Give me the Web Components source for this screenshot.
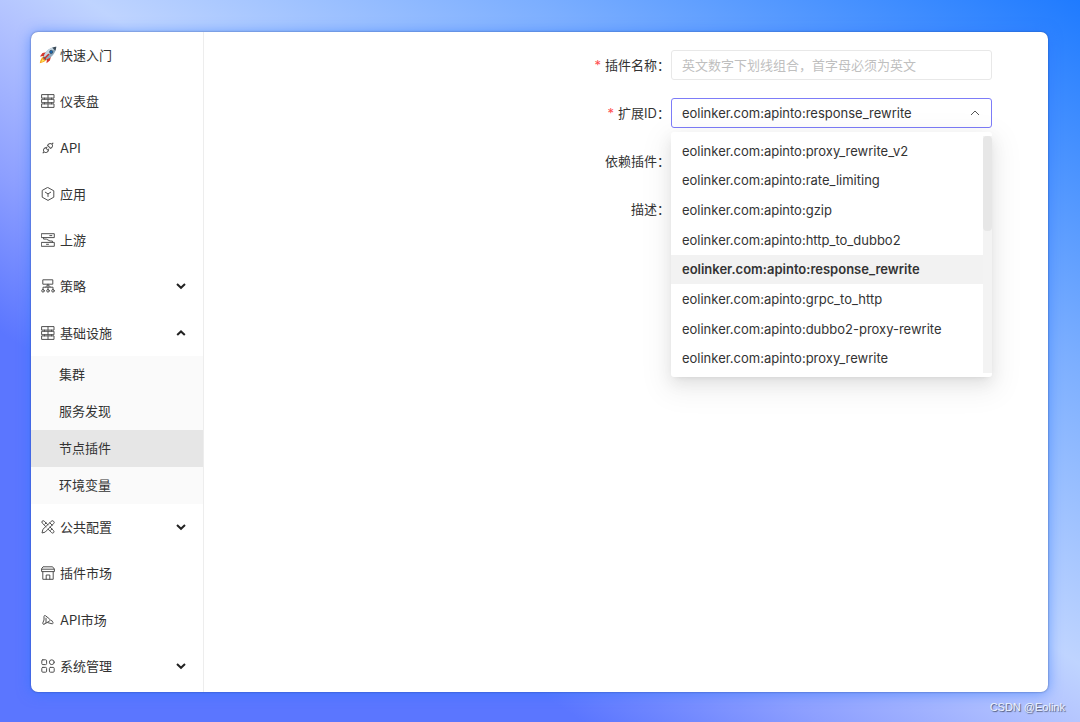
<!DOCTYPE html>
<html lang="zh-CN">
<head>
<meta charset="utf-8">
<meta name="viewport" content="width=device-width, initial-scale=1">
<title>节点插件</title>
<style>
  html, body { margin: 0; }
  body {
    font: 13px/20px Inter, "Noto Sans CJK SC", sans-serif;
    color: #333;
  }
</style>
</head>
<body>
<app-page>
  <side-nav slot="nav">
    <nav-item icon="rocket">快速入门</nav-item>
    <nav-item icon="grid">仪表盘</nav-item>
    <nav-item icon="api">API</nav-item>
    <nav-item icon="app">应用</nav-item>
    <nav-item icon="upstream">上游</nav-item>
    <nav-item icon="policy" arrow="down">策略</nav-item>
    <nav-item icon="grid" arrow="up">基础设施</nav-item>
    <sub-nav>
      <sub-item>集群</sub-item>
      <sub-item>服务发现</sub-item>
      <sub-item active>节点插件</sub-item>
      <sub-item>环境变量</sub-item>
    </sub-nav>
    <nav-item icon="tools" arrow="down">公共配置</nav-item>
    <nav-item icon="shop">插件市场</nav-item>
    <nav-item icon="market">API市场</nav-item>
    <nav-item icon="apps" arrow="down">系统管理</nav-item>
  </side-nav>
  <plugin-form>
    <form-field label="插件名称" kind="text" required placeholder="英文数字下划线组合，首字母必须为英文"></form-field>
    <form-field label="扩展ID" kind="select" required value="eolinker.com:apinto:response_rewrite">
      <option-panel>
        <option-row>eolinker.com:apinto:proxy_rewrite_v2</option-row>
        <option-row>eolinker.com:apinto:rate_limiting</option-row>
        <option-row>eolinker.com:apinto:gzip</option-row>
        <option-row>eolinker.com:apinto:http_to_dubbo2</option-row>
        <option-row selected>eolinker.com:apinto:response_rewrite</option-row>
        <option-row>eolinker.com:apinto:grpc_to_http</option-row>
        <option-row>eolinker.com:apinto:dubbo2-proxy-rewrite</option-row>
        <option-row>eolinker.com:apinto:proxy_rewrite</option-row>
      </option-panel>
    </form-field>
    <form-field label="依赖插件" kind="text"></form-field>
    <form-field label="描述" kind="textarea"></form-field>
  </plugin-form>
  <span slot="credit">CSDN @Eolink</span>
</app-page>

<script>
const define = (name, render, setup) => customElements.define(name, class extends HTMLElement {
  connectedCallback() {
    if (this.shadowRoot) return;
    this.attachShadow({ mode: 'open' }).innerHTML = render(this);
    if (setup) setup(this);
  }
});

const line = (body) => `<svg viewBox="0 0 14 14" fill="none" stroke="currentColor" stroke-width="1" stroke-linejoin="round" stroke-linecap="round" aria-hidden="true">${body}</svg>`;

const icons = {
  rocket: `<svg class="wide" viewBox="0 0 18 18" aria-hidden="true">
    <path d="M5.2 10.2C2.8 11.1 1.2 13.6.8 17.2c3.3-.5 5.9-2 6.9-4.4z" fill="#f6a21b"/>
    <path d="M4.6 12.2c-1.3.9-2 2.2-2.3 3.8 1.6-.3 2.8-1 3.6-2.3z" fill="#ffe35a"/>
    <path d="M7.3 6.2 3.5 7.1.9 10.6l4.5-.5zM11.9 10.8l-1 3.8-3.4 2.6.4-4.4z" fill="#d5352b"/>
    <path d="M4.8 10.2C6.3 5.2 10.8 1.3 17.3.7c-.6 6.4-4.5 11-9.5 12.5z" fill="#8fa8bb"/>
    <path d="M4.8 10.2C6.3 5.2 10.8 1.3 17.3.7L6.3 11.8z" fill="#c5d5e1"/>
    <path d="M13.3 1.7c1.3-.6 2.6-.9 4-1-.1 1.4-.4 2.7-1 4z" fill="#3d4c58"/>
    <path d="m4.8 10.2-.9 1.3 2.7 2.7 1.3-1z" fill="#5d6970"/>
    <circle cx="12.2" cy="5.9" r="1.6" fill="#1767b5" stroke="#344653" stroke-width=".7"/>
    <path d="M9.5 8.5 5 13" stroke="#c82d27" stroke-width="1.5" stroke-linecap="round"/>
  </svg>`,
  grid: line('<path d="M1 .6h12v3.5H1zM1 5.3h12v3.4H1zM1 9.9h12v3.5H1zM7 .6v3.5M7 5.3v3.4M7 9.9v3.5M3.5 4.1v1.2M10.5 4.1v1.2M3.5 8.7v1.2M10.5 8.7v1.2"/>'),
  api: `<svg viewBox="0 0 1024 1024" fill="currentColor" aria-hidden="true"><path d="M917.7 148.8l-42.4-42.4c-1.6-1.6-3.6-2.3-5.7-2.3s-4.1.8-5.7 2.3l-76.1 76.1a199.27 199.27 0 00-112.1-34.3c-51.2 0-102.4 19.5-141.5 58.6L432.3 308.7a8.03 8.03 0 000 11.3L704 591.7c1.6 1.6 3.6 2.3 5.7 2.3 2 0 4.1-.8 5.7-2.3l101.9-101.9c68.9-69 77-175.7 24.3-253.5l76.1-76.1c3.1-3.2 3.1-8.3 0-11.4zM769.1 441.7l-59.4 59.4-186.8-186.8 59.4-59.4c24.9-24.9 58.1-38.7 93.4-38.7 35.3 0 68.4 13.7 93.4 38.7 24.9 24.9 38.7 58.1 38.7 93.4 0 35.3-13.8 68.4-38.7 93.4zm-190.2 105a8.03 8.03 0 00-11.3 0L501 613.3 410.7 523l66.7-66.7c3.1-3.1 3.1-8.2 0-11.3L441 408.6a8.03 8.03 0 00-11.3 0L363 475.3l-43-43a7.85 7.85 0 00-5.7-2.3c-2 0-4.1.8-5.7 2.3L206.8 534.2c-68.9 69-77 175.7-24.3 253.5l-76.1 76.1a8.03 8.03 0 000 11.3l42.4 42.4c1.6 1.6 3.6 2.3 5.7 2.3s4.1-.8 5.7-2.3l76.1-76.1c33.7 22.9 72.9 34.3 112.1 34.3 51.2 0 102.4-19.5 141.5-58.6l101.9-101.9c3.1-3.1 3.1-8.2 0-11.3l-43-43 66.7-66.7c3.1-3.1 3.1-8.2 0-11.3l-36.6-36.2zM441.7 769.1a131.32 131.32 0 01-93.4 38.7c-35.3 0-68.4-13.7-93.4-38.7a131.32 131.32 0 01-38.7-93.4c0-35.3 13.7-68.4 38.7-93.4l59.4-59.4 186.8 186.8-59.4 59.4z"/></svg>`,
  app: line('<path d="M7 .6 12.8 3.8v6.4L7 13.4 1.2 10.2V3.8zM4.3 5.2 7 6.9l2.7-1.7M7 6.9v2.6"/>'),
  upstream: line('<path d="M.7.7h12.6v3.9H.7zM.7 9.4h12.6v3.9H.7zM2.6 4.6v1.5h2.7L9 8h2.4v1.4M8.8 2.6h2M5.5 11.3h2"/>'),
  policy: line('<path d="M2.2.8h9.6v4.4H2.2zM7 5.2v5.3M2 10.5V8.2h10v2.3M4.6 8 7 5.6 9.4 8"/><circle cx="2" cy="11.8" r="1.3"/><circle cx="7" cy="11.8" r="1.3"/><circle cx="12" cy="11.8" r="1.3"/>'),
  tools: line('<path d="M5 6.8 1.2 3a1.6 1.6 0 0 1 0-1.9 1.6 1.6 0 0 1 2 0L7 4.9M9 7l3.6 3.7a1.6 1.6 0 0 1 0 2 1.6 1.6 0 0 1-2 0L7 9.1M10 1.5a1.6 1.6 0 0 1 2.5-.3 1.6 1.6 0 0 1 0 2.5l-8.3 8.4L1 13l.8-3.3zM8.8 2.8l2.4 2.4M5.1 2.9 3.8 4.2M10.9 9 9.5 10.4"/>'),
  shop: line('<path d="M2.4.8h9.2l1.8 2.4v2.4H.6V3.2zM.6 3.2h12.8M1.8 5.6v7.7h10.4V5.6M5.2 13.3V9h3.6v4.3"/>'),
  market: line('<path d="M3 11.2c-1 .2-1.5-.5-1.2-1.3L3 7V3.4c0-.8.8-1.2 1.5-.7l4.2 3.4c.7.6.6 1.4 0 1.9L3 11.2M5 5.2v4.6M6.6 9.6l4.6 1.2c.8 0 1-.8.7-1.5l-1.4-2"/>'),
  apps: line('<rect x=".8" y=".8" width="4.8" height="4.8" rx="1"/><circle cx="10.8" cy="3.2" r="2.4"/><rect x=".8" y="8.4" width="4.8" height="4.8" rx="1"/><rect x="8.4" y="8.4" width="4.8" height="4.8" rx="1"/>')
};

define('app-page', () => `
  <style>
    :host {
      display: flex; flex-direction: column; min-height: 100vh;
      background: linear-gradient(to top right, #5b76ff 27%, #8d9fff 38%, #b3c3ff 49%, #bfd4ff 54%, #7baeff 75%, #1f7bff 100%);
    }
    .frame { flex: 1; display: flex; flex-direction: column; }
    .window {
      flex: 1; display: flex; margin: 32px 32px 0 31px;
      background: #fff; border-radius: 7px; overflow: hidden;
      box-shadow: 0 0 2px rgba(20, 40, 90, .6), 0 1px 14px rgba(40, 116, 255, .6);
    }
    main { flex: 1; min-width: 0; }
    footer {
      height: 30px; padding-right: 15px; text-align: right;
      font: 11px/30px "Liberation Sans", sans-serif;
      color: #eef3ff; text-shadow: 1px 1px 1px #4c5670;
    }
  </style>
  <div class="frame">
    <div class="window"><slot name="nav"></slot><main><slot></slot></main></div>
    <footer><slot name="credit"></slot></footer>
  </div>`);

define('side-nav', () => `
  <style>
    :host { display: flex; flex: none; width: 172px; border-right: 1px solid #ededed; }
    nav { flex: 1; display: flex; flex-direction: column; padding-bottom: 3px; }
  </style>
  <nav><slot></slot></nav>`);

define('nav-item', (el) => {
  const arrow = el.getAttribute('arrow');
  const chevron = arrow
    ? `<svg class="chevron" viewBox="0 0 10 10" fill="none" stroke="currentColor" stroke-width="2" aria-hidden="true"><path d="${arrow === 'up' ? 'M1.2 7 5 3.4 8.8 7' : 'M1 3 5 6.8 9 3'}"/></svg>`
    : '';
  return `
  <style>
    :host { display: flex; flex: 1 0 auto; min-height: 40px; }
    a { flex: 1; display: flex; align-items: center; gap: 5px; padding: 0 17px 0 10px; color: inherit; text-decoration: none; }
    .icon { flex: none; display: flex; align-items: center; justify-content: center; width: 14px; height: 14px; }
    svg { flex: none; width: 14px; height: 14px; color: #505050; }
    .wide { width: 18px; height: 18px; }
    .label { flex: 1; }
    .chevron { width: 10px; height: 10px; color: #222; }
  </style>
  <a href="#"><span class="icon">${icons[el.getAttribute('icon')]}</span><span class="label"><slot></slot></span>${chevron}</a>`;
});

define('sub-nav', () => `
  <style>:host { display: flex; flex-direction: column; flex: none; background: #fafafa; }</style>
  <slot></slot>`);

define('sub-item', () => `
  <style>
    :host { display: block; }
    a { display: block; padding-left: 28px; line-height: 37px; color: inherit; text-decoration: none; }
    :host([active]) a { background: #e6e6e6; }
  </style>
  <a href="#"><slot></slot></a>`);

define('plugin-form', () => `
  <style>
    :host { display: block; }
    form { display: flex; flex-direction: column; gap: 18px; padding: 18px 56px 0 0; }
  </style>
  <form><slot></slot></form>`);

define('form-field', (el) => {
  const kind = el.getAttribute('kind');
  const required = el.hasAttribute('required');
  const req = required ? 'required' : '';
  const control = {
    text: `<input id="control" type="text" ${req} placeholder="${el.getAttribute('placeholder') || ''}">`,
    textarea: '<textarea id="control" rows="4"></textarea>',
    select: `<select id="control" ${req}><option selected>${el.getAttribute('value') || ''}</option></select>
      <svg viewBox="0 0 10 10" fill="none" stroke="#555" stroke-width="1" aria-hidden="true"><path d="M1 7 5 3l4 4"/></svg>`
  }[kind];
  return `
  <style>
    :host { display: grid; grid-template-columns: 16fr 11fr; }
    label { padding-right: 1px; line-height: 30px; text-align: right; }
    .star { color: #ff4d4f; margin-right: 4px; }
    .control { position: relative; min-width: 0; }
    input, select, textarea {
      display: block; box-sizing: border-box; width: 100%; height: 30px; margin: 0; padding: 0 10px;
      border: 1px solid #e8e8e8; border-radius: 3px; background: #fff; outline: none;
      font: inherit; color: inherit; appearance: none; resize: none;
    }
    textarea { height: 96px; }
    select { border-color: #7d7cf8; }
    ::placeholder { color: #bfbfbf; opacity: 1; }
    svg { position: absolute; top: 10px; right: 12px; width: 10px; height: 10px; pointer-events: none; }
  </style>
  <label for="control">${required ? '<span class="star">*</span>' : ''}${el.getAttribute('label')}<span>：</span></label>
  <div class="control">${control}<slot></slot></div>`;
});

define('option-panel', () => `
  <style>
    :host {
      position: absolute; z-index: 1; top: 100%; left: 0; right: 0; margin-top: 4px;
      display: flex; box-sizing: border-box; height: 245px; padding: 4px 0;
      background: #fff; border-radius: 3px;
      box-shadow: 0 3px 6px -4px rgba(0,0,0,.12), 0 6px 16px rgba(0,0,0,.08), 0 9px 28px 8px rgba(0,0,0,.05);
    }
    .list { flex: 1; display: flex; flex-direction: column; }
    .track { width: 9px; background: #f3f3f3; }
    .thumb { height: 40%; background: #e7e7e7; border-radius: 4px; }
  </style>
  <div class="list" role="listbox" aria-label="扩展ID"><slot></slot></div>
  <div class="track" aria-hidden="true"><div class="thumb"></div></div>`);

define('option-row', () => `
  <style>
    :host { flex: 1; display: flex; align-items: center; padding: 0 11px; white-space: nowrap; }
    :host([selected]) { background: #f2f2f2; font-weight: 600; }
  </style>
  <slot></slot>`,
  (el) => {
    el.setAttribute('role', 'option');
    el.setAttribute('aria-selected', String(el.hasAttribute('selected')));
  });
</script>
</body>
</html>
